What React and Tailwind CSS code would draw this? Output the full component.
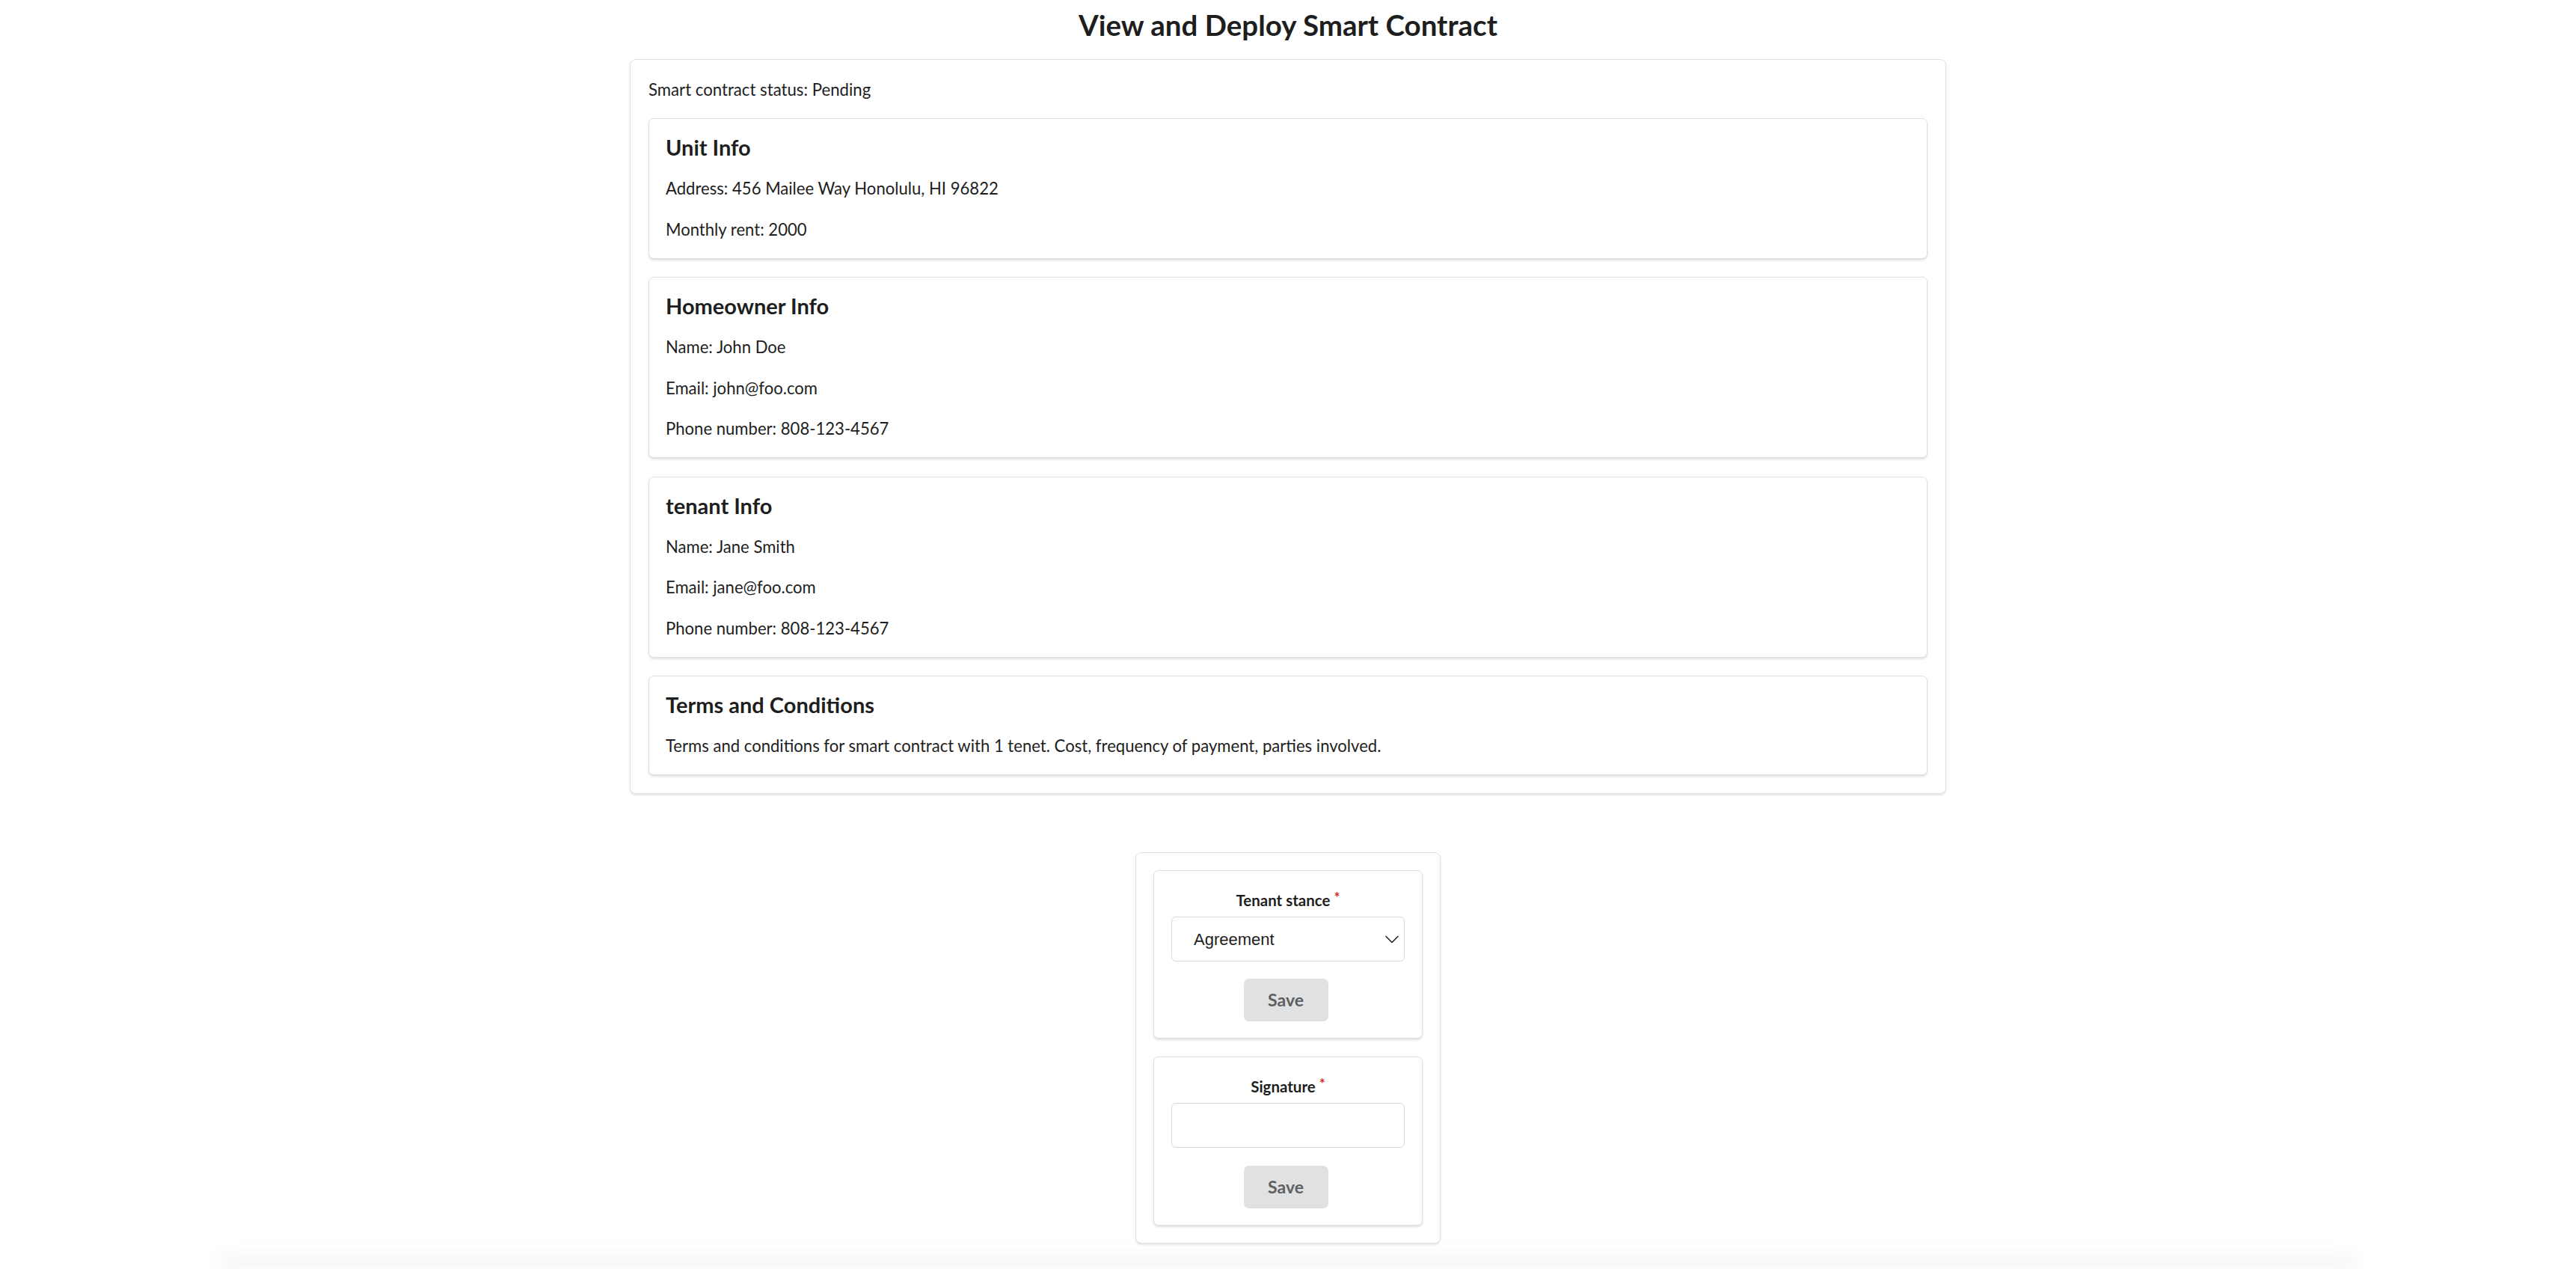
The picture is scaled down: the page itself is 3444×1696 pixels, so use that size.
import React from "react";

function InfoCard({ title, lines }) {
  return (
    <div className="border border-[#e0e0e0] rounded-[7px] bg-white shadow-[0_2px_3px_rgba(0,0,0,0.12)] px-[22px] py-[22px] flex flex-col">
      <h3 className="text-[29px] leading-[31px] font-bold text-[#1e1e1e] mb-[24px]">{title}</h3>
      <div className="flex flex-col gap-[22.5px]">
        {lines.map((l) => (
          <p key={l} className="text-[22.1px] leading-[32px] text-[#1e1e1e]">{l}</p>
        ))}
      </div>
    </div>
  );
}

function Label({ children }) {
  return (
    <div className="flex justify-center items-start h-[32px]">
      <span className="text-[20.5px] leading-[32px] font-bold text-[#1e1e1e]">{children}</span>
      <span className="ml-[5px] text-[19px] leading-[20px] mt-[2px] text-[#d32f2f] font-bold">*</span>
    </div>
  );
}

function SaveButton() {
  return (
    <div className="flex justify-center pr-[6px]">
      <button className="w-[113px] h-[57px] rounded-[7px] bg-[#e0e1e2] text-[#5f6062] text-[23px] font-bold">
        Save
      </button>
    </div>
  );
}

export default function App() {
  return (
    <div
      className="w-[3444px] h-[1696px] overflow-hidden bg-white flex flex-col items-center"
      style={{ fontFamily: "Lato, 'Noto Sans', sans-serif" }}
    >
      <h1 className="mt-[10px] text-[38.5px] leading-[46px] font-bold text-[#1e1e1e]">
        View and Deploy Smart Contract
      </h1>

      <div className="mt-[23px] w-[1760px] border border-[#e0e0e0] rounded-[8px] bg-white shadow-[0_2px_3px_rgba(0,0,0,0.10)] p-[24px] flex flex-col">
        <p className="text-[22.2px] leading-[32px] text-[#1e1e1e] mb-[22px]">Smart contract status: Pending</p>
        <div className="flex flex-col gap-[24.5px]">
          <InfoCard
            title="Unit Info"
            lines={["Address: 456 Mailee Way Honolulu, HI 96822", "Monthly rent: 2000"]}
          />
          <InfoCard
            title="Homeowner Info"
            lines={["Name: John Doe", "Email: john@foo.com", "Phone number: 808-123-4567"]}
          />
          <InfoCard
            title="tenant Info"
            lines={["Name: Jane Smith", "Email: jane@foo.com", "Phone number: 808-123-4567"]}
          />
          <InfoCard
            title="Terms and Conditions"
            lines={[
              "Terms and conditions for smart contract with 1 tenet. Cost, frequency of payment, parties involved.",
            ]}
          />
        </div>
      </div>

      <div className="mt-[78px] w-[408px] border border-[#e0e0e0] rounded-[8px] bg-white shadow-[0_2px_3px_rgba(0,0,0,0.10)] p-[23px] flex flex-col gap-[24px]">
        <div className="border border-[#e0e0e0] rounded-[7px] bg-white shadow-[0_2px_3px_rgba(0,0,0,0.12)] px-[23px] pt-[23px] pb-[22px] flex flex-col">
          <Label>Tenant stance</Label>
          <div className="mt-[6px] h-[60px] border border-[#d9d9d9] rounded-[6px] flex items-center justify-between pl-[29px] pr-[7px]">
            <span
              className="text-[22px] text-[#1e1e1e]"
              style={{ fontFamily: "'Liberation Sans', Arial, sans-serif" }}
            >
              Agreement
            </span>
            <svg width="18" height="11" viewBox="0 0 18 11" fill="none">
              <path d="M1 1.5 L9 9.5 L17 1.5" stroke="#222" strokeWidth="1.6" strokeLinecap="round" strokeLinejoin="round" />
            </svg>
          </div>
          <div className="mt-[23px]">
            <SaveButton />
          </div>
        </div>

        <div className="border border-[#e0e0e0] rounded-[7px] bg-white shadow-[0_2px_3px_rgba(0,0,0,0.12)] px-[23px] pt-[23px] pb-[22px] flex flex-col">
          <Label>Signature</Label>
          <div className="mt-[6px] h-[60px] border border-[#d9d9d9] rounded-[6px]" />
          <div className="mt-[24px]">
            <SaveButton />
          </div>
        </div>
      </div>

      <div className="mt-[14px] w-[2860px] h-[40px] rounded-[20px] bg-[#f6f6f6] blur-[10px]" />
    </div>
  );
}
